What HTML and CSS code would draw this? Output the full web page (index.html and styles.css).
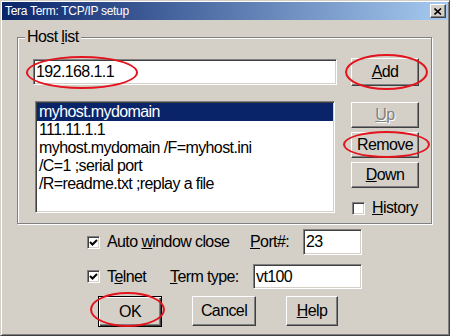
FILE: index.html
```html
<!DOCTYPE html>
<html lang="en">
<head>
    <meta charset="UTF-8">
    <meta name="viewport" content="width=device-width, initial-scale=1.0">
    <title>Tera Term: TCP/IP setup</title>
    <link rel="stylesheet" href="styles.css">
</head>
<body>
    <div class="window">
        <div class="titlebar">
            <span class="title">Tera Term: TCP/IP setup</span>
            <span class="close-btn">
                <svg width="8" height="7" viewBox="0 0 8 7"><path d="M0.5 0.5 L7 6.5 M7 0.5 L0.5 6.5" stroke="#000" stroke-width="1.6" fill="none"/></svg>
            </span>
        </div>
        <fieldset class="group">
            <legend>Host <u>l</u>ist</legend>
            <div class="host-grid">
                <input class="textbox host-input" type="text" value="192.168.1.1" readonly>
                <button class="btn btn-add"><u>A</u>dd</button>
                <ul class="listbox">
                    <li class="selected">myhost.mydomain</li>
                    <li>111.11.1.1</li>
                    <li>myhost.mydomain /F=myhost.ini</li>
                    <li>/C=1 ;serial port</li>
                    <li>/R=readme.txt ;replay a file</li>
                </ul>
                <div class="side-col">
                    <button class="btn btn-disabled" disabled><u>U</u>p</button>
                    <button class="btn">Remove</button>
                    <button class="btn"><u>D</u>own</button>
                    <label class="check-row history">
                        <span class="check"></span>
                        <span><u>H</u>istory</span>
                    </label>
                </div>
            </div>
        </fieldset>
        <div class="options">
            <div class="opt-row">
                <label class="check-row w-auto">
                    <span class="check"><svg width="9" height="9" viewBox="0 0 9 9"><path d="M1 4 L3.5 6.5 L8 2" stroke="#000" stroke-width="2" fill="none"/></svg></span>
                    <span>Auto <u>w</u>indow close</span>
                </label>
                <span class="lbl-port"><u>P</u>ort#:</span>
                <input class="textbox port-input" type="text" value="23" readonly>
            </div>
            <div class="opt-row row-term">
                <label class="check-row w-telnet">
                    <span class="check"><svg width="9" height="9" viewBox="0 0 9 9"><path d="M1 4 L3.5 6.5 L8 2" stroke="#000" stroke-width="2" fill="none"/></svg></span>
                    <span>T<u>e</u>lnet</span>
                </label>
                <span class="lbl-term"><u>T</u>erm type:</span>
                <input class="textbox term-input" type="text" value="vt100" readonly>
            </div>
        </div>
        <div class="actions">
            <button class="btn btn-default">OK</button>
            <button class="btn">Cancel</button>
            <button class="btn btn-help"><u>H</u>elp</button>
        </div>

        <span class="mark mark-host"></span>
        <span class="mark mark-add"></span>
        <span class="mark mark-remove"></span>
        <span class="mark mark-ok"></span>
    </div>
</body>
</html>
```

FILE: styles.css
```css
body {
    margin: 0;
    padding: 0;
    background-color: #D4D0C8;
}
.window {
    position: relative;
    width: 450px;
    height: 336px;
    box-sizing: border-box;
    padding: 1px;
    background-color: #D4D0C8;
    border: 1px solid;
    border-color: #D4D0C8 #404040 #404040 #D4D0C8;
    box-shadow: inset 1px 1px #fff, inset -1px -1px #808080;
    font-family: "Liberation Sans", Arial, sans-serif;
    font-size: 16px;
    letter-spacing: -0.6px;
    color: #000;
}
.titlebar {
    display: flex;
    align-items: center;
    justify-content: space-between;
    height: 18px;
    padding: 0 2px 0 3px;
    background: linear-gradient(to right, #0A246A, #A6CAF0);
    color: #fff;
    font-size: 12px;
    letter-spacing: -0.3px;
}
.close-btn {
    display: flex;
    align-items: center;
    justify-content: center;
    width: 16px;
    height: 14px;
    box-sizing: border-box;
    background-color: #D4D0C8;
    border: 1px solid;
    border-color: #fff #404040 #404040 #fff;
    box-shadow: inset -1px -1px #808080;
}
.group {
    margin: 8px 0 0 15px;
    padding: 0;
    width: 415px;
    box-sizing: border-box;
    border: 1px solid #808080;
    box-shadow: inset 1px 1px #fff, 1px 1px #fff;
}
.group legend {
    margin-left: 7px;
    padding: 0 2px;
    line-height: 18px;
    background-color: #D4D0C8;
}
.host-grid {
    display: grid;
    grid-template-columns: 1fr 68px;
    column-gap: 14px;
    row-gap: 15px;
    align-items: center;
    padding: 12px 12px 8px 15px;
}
.textbox {
    box-sizing: border-box;
    height: 26px;
    margin: 0;
    padding: 0 0 0 2px;
    border: 1px solid;
    border-color: #808080 #fff #fff #808080;
    box-shadow: inset 1px 1px #404040, inset -1px -1px #D4D0C8;
    background-color: #fff;
    font: inherit;
    letter-spacing: inherit;
    color: #000;
    outline: none;
}
.host-input {
    width: 100%;
}
.btn {
    box-sizing: border-box;
    width: 100%;
    height: 26px;
    margin: 0;
    padding: 0;
    background-color: #D4D0C8;
    border: 1px solid;
    border-color: #fff #404040 #404040 #fff;
    box-shadow: inset -1px -1px #808080;
    font: inherit;
    letter-spacing: inherit;
    color: #000;
}
.btn-add {
    height: 28px;
}
.btn-disabled {
    color: #808080;
    text-shadow: 1px 1px #fff;
}
.listbox {
    align-self: start;
    list-style: none;
    margin: 0 2px;
    padding: 1px;
    height: 112px;
    box-sizing: border-box;
    border: 1px solid;
    border-color: #808080 #fff #fff #808080;
    box-shadow: inset 1px 1px #404040, inset -1px -1px #D4D0C8;
    background-color: #fff;
}
.listbox li {
    height: 18px;
    line-height: 18px;
    padding-left: 2px;
    white-space: nowrap;
}
.listbox li.selected {
    background-color: #0A246A;
    color: #fff;
}
.side-col {
    align-self: start;
    display: flex;
    flex-direction: column;
    gap: 4px;
    padding-top: 1px;
}
.check-row {
    display: flex;
    align-items: center;
    gap: 7px;
}
.history {
    margin-top: 9px;
    padding-left: 1px;
    height: 14px;
}
.check {
    display: flex;
    align-items: center;
    justify-content: center;
    width: 13px;
    height: 13px;
    box-sizing: border-box;
    border: 1px solid;
    border-color: #808080 #fff #fff #808080;
    box-shadow: inset 1px 1px #404040, inset -1px -1px #D4D0C8;
    background-color: #fff;
    flex: none;
}
.options {
    display: flex;
    flex-direction: column;
    gap: 9px;
    margin: 5px 0 0 85px;
}
.opt-row {
    display: flex;
    align-items: center;
    height: 26px;
}
.row-term {
    height: 25px;
}
.w-auto {
    width: 163px;
}
.w-telnet {
    width: 83px;
}
.lbl-port {
    width: 53px;
}
.lbl-term {
    width: 83px;
}
.port-input {
    width: 59px;
}
.term-input {
    width: 109px;
    height: 25px;
}
.actions {
    display: flex;
    align-items: flex-start;
    gap: 30px;
    margin: 7px 0 0 96px;
}
.actions .btn {
    width: 64px;
    height: 30px;
}
.actions .btn-help {
    width: 52px;
}
.actions .btn-default {
    height: 31px;
    border: 1px solid #000;
    box-shadow: inset 1px 1px #fff, inset -1px -1px #404040, inset -2px -2px #808080;
}
.mark {
    position: absolute;
    box-sizing: border-box;
    border: 2px solid #E3141E;
    border-radius: 50%;
    pointer-events: none;
}
.mark-host {
    left: 25px;
    top: 55px;
    width: 112px;
    height: 33px;
}
.mark-add {
    left: 344px;
    top: 53px;
    width: 83px;
    height: 36px;
}
.mark-remove {
    left: 342px;
    top: 130px;
    width: 87px;
    height: 27px;
}
.mark-ok {
    left: 89px;
    top: 291px;
    width: 75px;
    height: 35px;
}
```
